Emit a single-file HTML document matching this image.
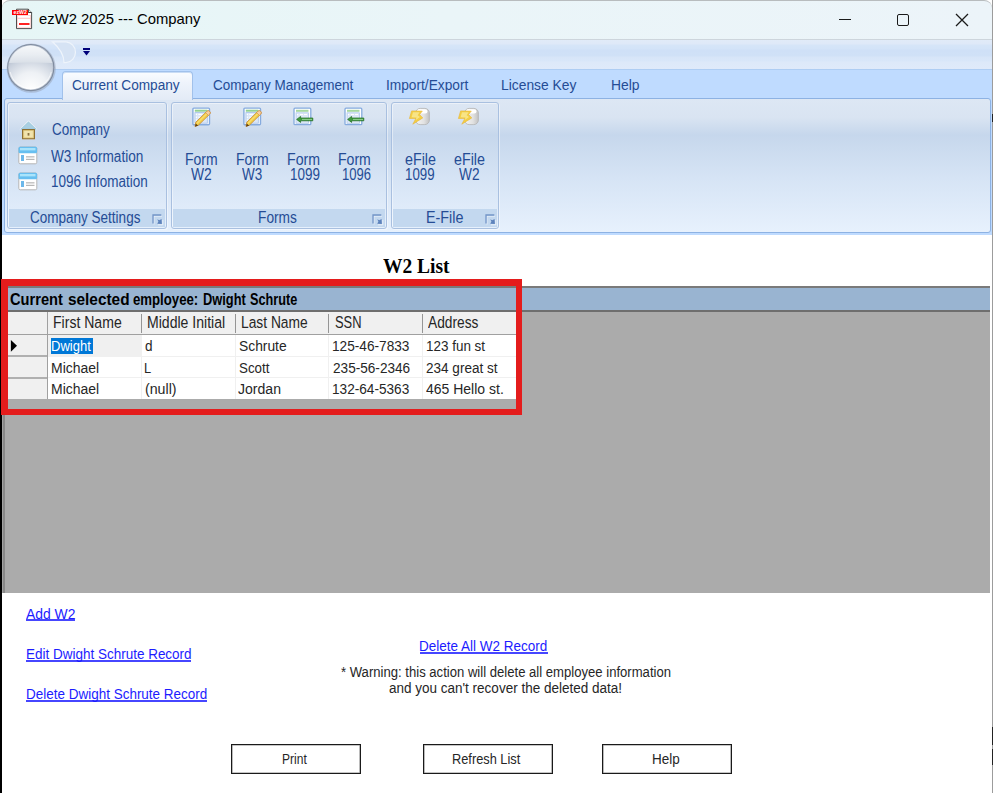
<!DOCTYPE html>
<html><head><meta charset="utf-8">
<style>
*{box-sizing:border-box}
html,body{margin:0;padding:0}
body{width:993px;height:793px;position:relative;overflow:hidden;background:#fff;font-family:"Liberation Sans",sans-serif}
.a{position:absolute}
.t{position:absolute;white-space:nowrap;line-height:1;transform-origin:0 0}
.u{text-decoration:underline;text-decoration-thickness:1.5px;text-underline-offset:2px}
.rb{color:#15428b;font-size:13.5px}
.grp{position:absolute;top:102px;height:127px;border:1px solid #a9c0e0;border-radius:3px;box-shadow:inset 1px 1px 0 rgba(255,255,255,0.45),1px 1px 0 rgba(255,255,255,0.45)}
.glbl{position:absolute;left:1px;right:1px;bottom:1px;height:18px;background:#c3d8ef}
.col{position:absolute;top:312px;height:23px;background:#f0f0f0;border-bottom:1px solid #a0a0a0}
.sep{position:absolute;top:314px;height:19px;width:1px;background:#959595}
.cell{font-size:13.6px;color:#000}
.link{color:#0000ff;text-decoration:underline;font-size:13.4px}
.btn{position:absolute;top:744px;width:130px;height:30px;border:1px solid #1a1a1a;box-shadow:inset 0 0 0 0.6px rgba(0,0,0,0.45);background:#fff}
</style></head><body>
<!-- outside black strip -->
<div class="a" style="left:0;top:0;width:2px;height:793px;background:#000"></div>
<!-- window right border -->
<div class="a" style="left:992px;top:0;width:1px;height:793px;background:#9c9c9c"></div>
<div class="a" style="left:992px;top:114px;width:1px;height:8px;background:#222"></div>
<div class="a" style="left:992px;top:727px;width:1px;height:18px;background:#222"></div>
<div class="a" style="left:992px;top:749px;width:1px;height:16px;background:#222"></div>
<!-- title bar -->
<div class="a" style="left:2px;top:0;width:990px;height:40px;background:linear-gradient(90deg,#e6f6f6,#eaf5f8 45%,#ecf4f9);border-top:1px solid #b8bcbe;border-bottom:1px solid #cdd5dc;border-radius:8px 8px 0 0"></div>

<!-- QAT -->
<div class="a" style="left:2px;top:40px;width:990px;height:29px;background:linear-gradient(#e1ebf8 0,#dfe9f8 4px,#d6e5f8 5px,#d3e3f8 9px,#cfe0f7 10px,#d0e1f7 16px,#d7e5f8 17px,#d9e7f9 21px,#dde9f9 22px,#dfeafa 29px)"></div>
<!-- tab strip -->
<div class="a" style="left:2px;top:69px;width:990px;height:166px;background:#bfdbff;border-top:1px solid #aecdf3"></div>

<!-- ribbon panel -->
<div class="a" style="left:4px;top:98px;width:987px;height:135px;border:1px solid #8db2e3;border-radius:3px;background:linear-gradient(#dde7f4 0%,#d9e4f2 14%,#c6d7ec 27%,#d6e4f5 60%,#e7f1fd 100%)"></div>


<!-- title icon -->
<svg class="a" style="left:11px;top:8px" width="22" height="22" viewBox="0 0 22 22">
<path d="M5.5 1.2 H17.3 L20.6 4.5 V20.6 H5.5 Z" fill="#fff" stroke="#3a3a3a" stroke-width="0.9"/>
<path d="M17.3 1.2 V4.5 H20.6" fill="#e8e8e8" stroke="#222" stroke-width="0.9"/>
<rect x="6.6" y="7.5" width="12.8" height="11.8" fill="none" stroke="#fcc" stroke-width="0.8"/>
<rect x="6.6" y="9.8" width="12.8" height="0.9" fill="#fbb"/>
<rect x="8" y="15" width="10.5" height="2" fill="#f22"/>
<rect x="1" y="2" width="16" height="5" fill="#f00"/>
<text x="2.6" y="6.4" font-size="5.2" font-family="Liberation Sans" font-weight="bold" fill="#fff">ezW2</text>
</svg>
<!-- window controls -->
<div class="a" style="left:839px;top:19px;width:12px;height:1px;background:#1a1a1a"></div>
<div class="a" style="left:897px;top:14px;width:12px;height:12px;border:1.3px solid #1a1a1a;border-radius:2px"></div>
<svg class="a" style="left:955px;top:13px" width="14" height="14"><path d="M1 1 L13 13 M13 1 L1 13" stroke="#1a1a1a" stroke-width="1.3"/></svg>
<!-- orb -->
<svg class="a" style="left:5px;top:42px" width="52" height="52" viewBox="0 0 52 52">
<defs>
<radialGradient id="orbl" cx="0.5" cy="0.92" r="0.75"><stop offset="0" stop-color="#ffffff"/><stop offset="0.45" stop-color="#eef1f5"/><stop offset="0.8" stop-color="#c9d1dd"/><stop offset="1" stop-color="#aeb8c8"/></radialGradient>
<linearGradient id="orbu" x1="0" y1="0" x2="0" y2="1"><stop offset="0" stop-color="#fbfcfd"/><stop offset="0.6" stop-color="#e9edf2"/><stop offset="1" stop-color="#d9dfe7"/></linearGradient>
<clipPath id="orbc"><circle cx="25.7" cy="25.5" r="22"/></clipPath>
</defs>
<circle cx="26.2" cy="26.2" r="24.6" fill="#9aa6b9" opacity="0.55"/>
<circle cx="25.8" cy="25.6" r="23.6" fill="#7f8b9e"/>
<circle cx="25.7" cy="25.5" r="22.6" fill="#b7c0ce"/>
<g clip-path="url(#orbc)">
<rect x="0" y="0" width="52" height="52" fill="url(#orbl)"/>
<path d="M0 0 H52 V21.2 Q26 20 0 21.2 Z" fill="url(#orbu)"/>
</g>
<path d="M5.2 30 A21 21 0 0 0 46.2 30" fill="none" stroke="#ffffff" stroke-width="0.9" opacity="0.7"/>
</svg>
<!-- qat D shape -->
<svg class="a" style="left:51px;top:40px" width="28" height="25"><path d="M1.5 1.8 H15 A10.5 10.5 0 0 1 15 22.7 H13 Q13 12 1.5 1.8 Z" fill="#d6e3f4" stroke="#eef4fb" stroke-width="1.2"/></svg>
<!-- qat dropdown -->
<div class="a" style="left:83px;top:48px;width:7px;height:1.5px;background:#00007a"></div>
<svg class="a" style="left:83px;top:51px" width="7" height="5"><path d="M0 0 H7 L3.5 4.5Z" fill="#00007a"/></svg>
<!-- active tab -->
<div class="a" style="left:62px;top:71px;width:131px;height:29px;border:1px solid #a1c1eb;border-bottom:none;border-radius:4px 4px 0 0;box-shadow:inset 0 1px 0 #c9dcf5;background:linear-gradient(#fafcff,#eef3fb 40%,#e3ebf6)"></div>

<!-- groups -->
<div class="grp" style="left:7px;width:160px"><div class="glbl"></div></div>
<div class="grp" style="left:171px;width:216px"><div class="glbl"></div></div>
<div class="grp" style="left:391px;width:108px"><div class="glbl"></div></div>




<!-- house -->
<svg class="a" style="left:18px;top:119px" width="21" height="22" viewBox="0 0 21 22">
<path d="M10.5 1.5 L19.5 10.5 H17 V20.5 H4 V10.5 H1.5 Z" fill="#fff" opacity="0.9"/>
<path d="M10.5 2.8 L18.2 10.2 H2.8 Z" fill="#a9cfe2" stroke="#8cbfd6" stroke-width="0.6"/>
<rect x="4.6" y="10.6" width="11.8" height="9.2" fill="#e6cf86" stroke="#8a6a2c" stroke-width="1.1"/>
<rect x="6.2" y="12" width="8.6" height="6.2" fill="#f1e3ad"/>
<rect x="9.6" y="14" width="1.8" height="2.6" fill="#8a7040"/>
</svg>
<!-- w3 info icons -->
<svg class="a" style="left:18px;top:146px" width="20" height="19" viewBox="0 0 20 19">
<rect x="0.8" y="1" width="18" height="16.8" rx="1.5" fill="#fff" stroke="#b5b5b5" stroke-width="1"/>
<rect x="0.5" y="0.8" width="18.6" height="6.4" rx="1.5" fill="#67bff0"/>
<rect x="2" y="2" width="15.5" height="2.4" fill="#a9e4fb"/>
<rect x="3" y="9" width="3" height="6" fill="#6db8ea"/>
<rect x="8" y="10.3" width="8.5" height="1.1" fill="#b0b0b0"/>
<rect x="8" y="12.8" width="8.5" height="1.1" fill="#b0b0b0"/>
</svg>
<svg class="a" style="left:18px;top:172px" width="20" height="19" viewBox="0 0 20 19">
<rect x="0.8" y="1" width="18" height="16.8" rx="1.5" fill="#fff" stroke="#b5b5b5" stroke-width="1"/>
<rect x="0.5" y="0.8" width="18.6" height="6.4" rx="1.5" fill="#67bff0"/>
<rect x="2" y="2" width="15.5" height="2.4" fill="#a9e4fb"/>
<rect x="3" y="9" width="3" height="6" fill="#6db8ea"/>
<rect x="8" y="10.3" width="8.5" height="1.1" fill="#b0b0b0"/>
<rect x="8" y="12.8" width="8.5" height="1.1" fill="#b0b0b0"/>
</svg>
<svg class="a" style="left:192px;top:107px" width="22" height="22" viewBox="0 0 22 22">
<rect x="0.9" y="1.1" width="16.6" height="16.6" rx="1" fill="#fff" stroke="#86abde" stroke-width="1.4"/>
<rect x="2.8" y="2.7" width="12.6" height="2" fill="#92d092"/>
<rect x="2.9" y="5.6" width="12.4" height="10.6" fill="#dbe7f7" stroke="#a2bfe8" stroke-width="0.8"/>
<rect x="3.8" y="6.8" width="1.2" height="1.2" fill="#fff"/><rect x="3.8" y="9.6" width="1.2" height="1.2" fill="#fff"/><rect x="3.8" y="12.4" width="1.2" height="1.2" fill="#fff"/>
<rect x="6.3" y="6.9" width="4" height="1" fill="#fff"/><rect x="6.3" y="9.7" width="3" height="1" fill="#fff"/>
<path d="M3.8 15.2 L15.0 4.2 A2 2 0 0 1 17.8 7.0 L6.6 18.0 L3.0 19.6 Z" fill="#f2cf48" stroke="#c8852e" stroke-width="0.8" stroke-linejoin="round"/>
<path d="M5.0 16.4 L15.6 5.9" stroke="#fae68a" stroke-width="1"/>
<path d="M15.0 4.2 A2 2 0 0 1 17.8 7.0 L16.4 8.4 L13.6 5.6 Z" fill="#f5cfa3" stroke="#cf8b3c" stroke-width="0.6"/>
<path d="M3.0 19.6 L3.8 16.4 L6.2 18.8 Z" fill="#5e3f12"/>
</svg>
<svg class="a" style="left:243px;top:107px" width="22" height="22" viewBox="0 0 22 22">
<rect x="0.9" y="1.1" width="16.6" height="16.6" rx="1" fill="#fff" stroke="#86abde" stroke-width="1.4"/>
<rect x="2.8" y="2.7" width="12.6" height="2" fill="#92d092"/>
<rect x="2.9" y="5.6" width="12.4" height="10.6" fill="#dbe7f7" stroke="#a2bfe8" stroke-width="0.8"/>
<rect x="3.8" y="6.8" width="1.2" height="1.2" fill="#fff"/><rect x="3.8" y="9.6" width="1.2" height="1.2" fill="#fff"/><rect x="3.8" y="12.4" width="1.2" height="1.2" fill="#fff"/>
<rect x="6.3" y="6.9" width="4" height="1" fill="#fff"/><rect x="6.3" y="9.7" width="3" height="1" fill="#fff"/>
<path d="M3.8 15.2 L15.0 4.2 A2 2 0 0 1 17.8 7.0 L6.6 18.0 L3.0 19.6 Z" fill="#f2cf48" stroke="#c8852e" stroke-width="0.8" stroke-linejoin="round"/>
<path d="M5.0 16.4 L15.6 5.9" stroke="#fae68a" stroke-width="1"/>
<path d="M15.0 4.2 A2 2 0 0 1 17.8 7.0 L16.4 8.4 L13.6 5.6 Z" fill="#f5cfa3" stroke="#cf8b3c" stroke-width="0.6"/>
<path d="M3.0 19.6 L3.8 16.4 L6.2 18.8 Z" fill="#5e3f12"/>
</svg>
<svg class="a" style="left:293px;top:107px" width="22" height="21" viewBox="0 0 22 21">
<rect x="1" y="1.2" width="16.8" height="16.5" rx="1" fill="#fff" stroke="#86abde" stroke-width="1.3"/>
<rect x="3" y="2.8" width="12.5" height="2" fill="#a6d8a0"/>
<rect x="3" y="5.8" width="12.5" height="10.5" fill="#dde8f7" stroke="#a8c3ea" stroke-width="0.7"/>
<rect x="4" y="7" width="1.2" height="1.2" fill="#fff"/><rect x="7" y="7" width="3" height="1" fill="#fff"/><rect x="11" y="7" width="3" height="1" fill="#fff"/>
<path d="M3.6 12.4 L7.6 9.4 V11 H19.8 V13.8 H7.6 V15.4 Z" fill="#3f9a3f" stroke="#1f6b1f" stroke-width="0.7"/>
<rect x="9" y="11.9" width="10" height="0.9" fill="#9fd89f"/>
</svg>
<svg class="a" style="left:344px;top:107px" width="22" height="21" viewBox="0 0 22 21">
<rect x="1" y="1.2" width="16.8" height="16.5" rx="1" fill="#fff" stroke="#86abde" stroke-width="1.3"/>
<rect x="3" y="2.8" width="12.5" height="2" fill="#a6d8a0"/>
<rect x="3" y="5.8" width="12.5" height="10.5" fill="#dde8f7" stroke="#a8c3ea" stroke-width="0.7"/>
<rect x="4" y="7" width="1.2" height="1.2" fill="#fff"/><rect x="7" y="7" width="3" height="1" fill="#fff"/><rect x="11" y="7" width="3" height="1" fill="#fff"/>
<path d="M3.6 12.4 L7.6 9.4 V11 H19.8 V13.8 H7.6 V15.4 Z" fill="#3f9a3f" stroke="#1f6b1f" stroke-width="0.7"/>
<rect x="9" y="11.9" width="10" height="0.9" fill="#9fd89f"/>
</svg>
<svg class="a" style="left:408px;top:107px" width="23" height="20" viewBox="0 0 23 20">
<defs><linearGradient id="efg408" x1="0" y1="0" x2="1" y2="0"><stop offset="0" stop-color="#f4f4f4"/><stop offset="0.6" stop-color="#e2e2e2"/><stop offset="1" stop-color="#c2c2c2"/></linearGradient></defs>
<rect x="7.6" y="1.4" width="13.8" height="16.2" rx="4.6" fill="url(#efg408)" stroke="#b4b4b4" stroke-width="0.8"/>
<rect x="9" y="2.3" width="10.5" height="4.2" rx="2.2" fill="#fff"/>
<path d="M3.6 3.9 L14.3 4.1 L11.6 7.6 L14.8 10.9 L4.8 17.2 L7.8 11.6 L1.4 11.5 Z" fill="#f3cf45" stroke="#e9b637" stroke-width="0.6" stroke-linejoin="round"/>
<path d="M5 5.2 L11.6 5.3 L9.6 8.2 L12 9.9 L7.4 13.2 L8.6 10.4 L3.6 10.3 Z" fill="#f8e487"/>
</svg>
<svg class="a" style="left:457px;top:107px" width="23" height="20" viewBox="0 0 23 20">
<defs><linearGradient id="efg457" x1="0" y1="0" x2="1" y2="0"><stop offset="0" stop-color="#f4f4f4"/><stop offset="0.6" stop-color="#e2e2e2"/><stop offset="1" stop-color="#c2c2c2"/></linearGradient></defs>
<rect x="7.6" y="1.4" width="13.8" height="16.2" rx="4.6" fill="url(#efg457)" stroke="#b4b4b4" stroke-width="0.8"/>
<rect x="9" y="2.3" width="10.5" height="4.2" rx="2.2" fill="#fff"/>
<path d="M3.6 3.9 L14.3 4.1 L11.6 7.6 L14.8 10.9 L4.8 17.2 L7.8 11.6 L1.4 11.5 Z" fill="#f3cf45" stroke="#e9b637" stroke-width="0.6" stroke-linejoin="round"/>
<path d="M5 5.2 L11.6 5.3 L9.6 8.2 L12 9.9 L7.4 13.2 L8.6 10.4 L3.6 10.3 Z" fill="#f8e487"/>
</svg>
<svg class="a" style="left:152px;top:214px" width="12" height="12"><path d="M2 10.6 V2.2 H10" fill="none" stroke="#fff" stroke-width="1" opacity="0.55"/><path d="M1 9.5 V1 H9.3" fill="none" stroke="#7395c8" stroke-width="1.3"/><path d="M5.3 5.3 L7.2 6.3 L9.6 5.1 L9.9 9.9 L5.2 9.7 L6.4 7.6 Z" fill="#5e83bc"/><path d="M6 10.8 H10.8 V6" fill="none" stroke="#fff" stroke-width="0.8" opacity="0.8"/></svg>
<svg class="a" style="left:372px;top:214px" width="12" height="12"><path d="M2 10.6 V2.2 H10" fill="none" stroke="#fff" stroke-width="1" opacity="0.55"/><path d="M1 9.5 V1 H9.3" fill="none" stroke="#7395c8" stroke-width="1.3"/><path d="M5.3 5.3 L7.2 6.3 L9.6 5.1 L9.9 9.9 L5.2 9.7 L6.4 7.6 Z" fill="#5e83bc"/><path d="M6 10.8 H10.8 V6" fill="none" stroke="#fff" stroke-width="0.8" opacity="0.8"/></svg>
<svg class="a" style="left:485px;top:214px" width="12" height="12"><path d="M2 10.6 V2.2 H10" fill="none" stroke="#fff" stroke-width="1" opacity="0.55"/><path d="M1 9.5 V1 H9.3" fill="none" stroke="#7395c8" stroke-width="1.3"/><path d="M5.3 5.3 L7.2 6.3 L9.6 5.1 L9.9 9.9 L5.2 9.7 L6.4 7.6 Z" fill="#5e83bc"/><path d="M6 10.8 H10.8 V6" fill="none" stroke="#fff" stroke-width="0.8" opacity="0.8"/></svg>
<!-- content -->
<div class="a" style="left:2px;top:235px;width:990px;height:558px;background:#fff"></div>

<!-- grid -->
<div class="a" style="left:2px;top:286px;width:988px;height:307px;background:#ababab;border-top:2px solid #7a7a7a;border-left:3px solid #898989"></div>
<div class="a" style="left:2px;top:288px;width:1px;height:305px;background:#a3a3a3"></div>
<div class="a" style="left:4px;top:288px;width:986px;height:24px;background:#99b4d1;border-bottom:2px solid #6e6e6e"></div>

<div class="a" style="left:4px;top:312px;width:512px;height:87px;background:#fff"></div>
<div class="col" style="left:4px;width:512px"></div>
<div class="a" style="left:4px;top:335px;width:43px;height:64px;background:#f0f0f0"></div>
<div class="a" style="left:47px;top:312px;width:1px;height:87px;background:#a0a0a0"></div>
<!-- row header separators -->
<div class="a" style="left:4px;top:355px;width:43px;height:2px;background:#b0b0b0"></div>
<div class="a" style="left:4px;top:377px;width:43px;height:2px;background:#b0b0b0"></div>
<!-- header seps -->
<div class="sep" style="left:141px"></div>
<div class="sep" style="left:235px"></div>
<div class="sep" style="left:328px"></div>
<div class="sep" style="left:422px"></div>
<!-- data grid lines -->
<div class="a" style="left:48px;top:335px;width:93px;height:21px;background:#f0f0f0"></div>
<div class="a" style="left:48px;top:356px;width:468px;height:1px;background:#f0f0f0"></div>
<div class="a" style="left:48px;top:377px;width:468px;height:1px;background:#f0f0f0"></div>
<div class="a" style="left:141px;top:335px;width:1px;height:64px;background:#f0f0f0"></div>
<div class="a" style="left:235px;top:335px;width:1px;height:64px;background:#f0f0f0"></div>
<div class="a" style="left:328px;top:335px;width:1px;height:64px;background:#f0f0f0"></div>
<div class="a" style="left:422px;top:335px;width:1px;height:64px;background:#f0f0f0"></div>
<!-- header text -->
<!-- pointer -->
<svg class="a" style="left:10px;top:339px" width="9" height="14"><path d="M0.9 0.9 L7 6.8 L0.9 12.8Z" fill="#000"/></svg>
<!-- selection -->
<div class="a" style="left:51px;top:338px;width:42px;height:16px;background:#0078d7"></div>

<!-- red highlight box -->
<div class="a" style="left:1px;top:279px;width:521px;height:136px;border-style:solid;border-color:#e41c1c;border-width:7px 6px 6px 7px"></div>

<!-- links -->

<!-- buttons -->
<div class="btn" style="left:231px"></div>
<div class="btn" style="left:423px"></div>
<div class="btn" style="left:602px"></div>

<div class="t" style="left:39.20px;top:11.30px;font-size:15px;color:#000;transform:scaleX(0.9884);">ezW2 2025 --- Company</div>
<div class="t" style="left:72.30px;top:76.80px;font-size:15.3px;color:#254c95;transform:scaleX(0.8920);">Current Company</div>
<div class="t" style="left:212.60px;top:76.80px;font-size:15.3px;color:#254c95;transform:scaleX(0.8814);">Company Management</div>
<div class="t" style="left:385.60px;top:76.80px;font-size:15.3px;color:#254c95;transform:scaleX(0.8967);">Import/Export</div>
<div class="t" style="left:500.90px;top:76.80px;font-size:15.3px;color:#254c95;transform:scaleX(0.9046);">License Key</div>
<div class="t" style="left:611.19px;top:76.80px;font-size:15.3px;color:#254c95;transform:scaleX(0.9081);">Help</div>
<div class="t" style="left:51.50px;top:121.90px;font-size:15.8px;color:#254c95;transform:scaleX(0.8537);">Company</div>
<div class="t" style="left:51.10px;top:148.50px;font-size:15.8px;color:#254c95;transform:scaleX(0.8625);">W3 Information</div>
<div class="t" style="left:51.35px;top:174.40px;font-size:15.8px;color:#254c95;transform:scaleX(0.8546);">1096 Infomation</div>
<div class="t" style="left:30.30px;top:210.00px;font-size:15.8px;color:#254c95;transform:scaleX(0.8554);">Company Settings</div>
<div class="t" style="left:258.13px;top:209.80px;font-size:15.8px;color:#254c95;transform:scaleX(0.8688);">Forms</div>
<div class="t" style="left:425.79px;top:209.80px;font-size:15.8px;color:#254c95;transform:scaleX(0.9069);">E-File</div>
<div class="t" style="left:184.51px;top:152.20px;font-size:15.8px;color:#254c95;transform:scaleX(0.8853);">Form</div>
<div class="t" style="left:190.90px;top:167.10px;font-size:15.8px;color:#254c95;transform:scaleX(0.8774);">W2</div>
<div class="t" style="left:235.71px;top:152.20px;font-size:15.8px;color:#254c95;transform:scaleX(0.8881);">Form</div>
<div class="t" style="left:242.00px;top:167.10px;font-size:15.8px;color:#254c95;transform:scaleX(0.8532);">W3</div>
<div class="t" style="left:286.80px;top:152.20px;font-size:15.8px;color:#254c95;transform:scaleX(0.8965);">Form</div>
<div class="t" style="left:289.55px;top:167.10px;font-size:15.8px;color:#254c95;transform:scaleX(0.8528);">1099</div>
<div class="t" style="left:338.11px;top:152.20px;font-size:15.8px;color:#254c95;transform:scaleX(0.8909);">Form</div>
<div class="t" style="left:341.57px;top:167.10px;font-size:15.8px;color:#254c95;transform:scaleX(0.8266);">1096</div>
<div class="t" style="left:404.80px;top:152.20px;font-size:15.8px;color:#254c95;transform:scaleX(0.9056);">eFile</div>
<div class="t" style="left:405.06px;top:167.10px;font-size:15.8px;color:#254c95;transform:scaleX(0.8412);">1099</div>
<div class="t" style="left:453.60px;top:152.20px;font-size:15.8px;color:#254c95;transform:scaleX(0.9056);">eFile</div>
<div class="t" style="left:458.70px;top:167.10px;font-size:15.8px;color:#254c95;transform:scaleX(0.8643);">W2</div>
<div class="t" style="left:383.10px;top:255.70px;font-size:20px;color:#000;font-weight:bold;font-family:'Liberation Serif',serif;transform:scaleX(0.9741);">W2 List</div>
<div class="t" style="left:10.00px;top:291.90px;font-size:15.8px;color:#000;font-weight:bold;transform:scaleX(0.9258);">Current</div>
<div class="t" style="left:67.60px;top:291.90px;font-size:15.8px;color:#000;font-weight:bold;transform:scaleX(0.9732);">selected</div>
<div class="t" style="left:132.50px;top:291.90px;font-size:15.8px;color:#000;font-weight:bold;transform:scaleX(0.8351);">employee:</div>
<div class="t" style="left:203.39px;top:291.90px;font-size:15.8px;color:#000;font-weight:bold;transform:scaleX(0.8132);">Dwight</div>
<div class="t" style="left:250.40px;top:291.90px;font-size:15.8px;color:#000;font-weight:bold;transform:scaleX(0.8030);">Schrute</div>
<div class="t" style="left:53.14px;top:313.70px;font-size:16.3px;color:#262626;transform:scaleX(0.8632);">First Name</div>
<div class="t" style="left:147.14px;top:313.70px;font-size:16.3px;color:#262626;transform:scaleX(0.8630);">Middle Initial</div>
<div class="t" style="left:240.55px;top:313.70px;font-size:16.3px;color:#262626;transform:scaleX(0.8471);">Last Name</div>
<div class="t" style="left:335.40px;top:313.70px;font-size:16.3px;color:#262626;transform:scaleX(0.7916);">SSN</div>
<div class="t" style="left:428.30px;top:313.70px;font-size:16.3px;color:#262626;transform:scaleX(0.8442);">Address</div>
<div class="t" style="left:51.16px;top:338.30px;font-size:15.5px;color:#fff;transform:scaleX(0.8391);">Dwight</div>
<div class="t" style="left:144.50px;top:338.30px;font-size:15.5px;color:#262626;transform:scaleX(0.8750);">d</div>
<div class="t" style="left:238.70px;top:338.30px;font-size:15.5px;color:#262626;transform:scaleX(0.8921);">Schrute</div>
<div class="t" style="left:332.32px;top:338.30px;font-size:15.5px;color:#262626;transform:scaleX(0.8808);">125-46-7833</div>
<div class="t" style="left:426.33px;top:338.30px;font-size:15.5px;color:#262626;transform:scaleX(0.8676);">123 fun st</div>
<div class="t" style="left:50.70px;top:359.50px;font-size:15.5px;color:#262626;transform:scaleX(0.9006);">Michael</div>
<div class="t" style="left:144.08px;top:359.50px;font-size:15.5px;color:#262626;transform:scaleX(0.8250);">L</div>
<div class="t" style="left:238.70px;top:359.50px;font-size:15.5px;color:#262626;transform:scaleX(0.8607);">Scott</div>
<div class="t" style="left:332.60px;top:359.50px;font-size:15.5px;color:#262626;transform:scaleX(0.8776);">235-56-2346</div>
<div class="t" style="left:426.10px;top:359.50px;font-size:15.5px;color:#262626;transform:scaleX(0.8734);">234 great st</div>
<div class="t" style="left:50.70px;top:380.50px;font-size:15.5px;color:#262626;transform:scaleX(0.9006);">Michael</div>
<div class="t" style="left:144.90px;top:380.50px;font-size:15.5px;color:#262626;transform:scaleX(0.9157);">(null)</div>
<div class="t" style="left:238.40px;top:380.50px;font-size:15.5px;color:#262626;transform:scaleX(0.9065);">Jordan</div>
<div class="t" style="left:332.32px;top:380.50px;font-size:15.5px;color:#262626;transform:scaleX(0.8785);">132-64-5363</div>
<div class="t" style="left:426.10px;top:380.50px;font-size:15.5px;color:#262626;transform:scaleX(0.9028);">465 Hello st.</div>
<div class="a" style="left:25.7px;top:619px;width:49.4px;height:2px;background:#4646ff"></div>
<div class="t" style="left:26.00px;top:605.70px;font-size:15.5px;color:#1c1cff;transform:scaleX(0.8952);">Add W2</div>
<div class="a" style="left:26.1px;top:660px;width:164.8px;height:2px;background:#4646ff"></div>
<div class="t" style="left:25.53px;top:645.90px;font-size:15.5px;color:#1c1cff;transform:scaleX(0.8698);">Edit Dwight Schrute Record</div>
<div class="a" style="left:26.1px;top:700px;width:180.5px;height:2px;background:#4646ff"></div>
<div class="t" style="left:25.53px;top:685.90px;font-size:15.5px;color:#1c1cff;transform:scaleX(0.8696);">Delete Dwight Schrute Record</div>
<div class="a" style="left:420.0px;top:652px;width:128.1px;height:2px;background:#4646ff"></div>
<div class="t" style="left:419.43px;top:638.40px;font-size:15.5px;color:#1c1cff;transform:scaleX(0.8700);">Delete All W2 Record</div>
<div class="t" style="left:341.20px;top:663.50px;font-size:15.5px;color:#262626;transform:scaleX(0.8450);">* Warning: this action will delete all employee information</div>
<div class="t" style="left:389.20px;top:679.70px;font-size:15.5px;color:#262626;transform:scaleX(0.8708);">and you can&#39;t recover the deleted data!</div>
<div class="t" style="left:281.72px;top:751.00px;font-size:15.5px;color:#262626;transform:scaleX(0.7762);">Print</div>
<div class="t" style="left:451.87px;top:751.00px;font-size:15.5px;color:#262626;transform:scaleX(0.8253);">Refresh List</div>
<div class="t" style="left:651.53px;top:751.00px;font-size:15.5px;color:#262626;transform:scaleX(0.8692);">Help</div>
</body></html>
